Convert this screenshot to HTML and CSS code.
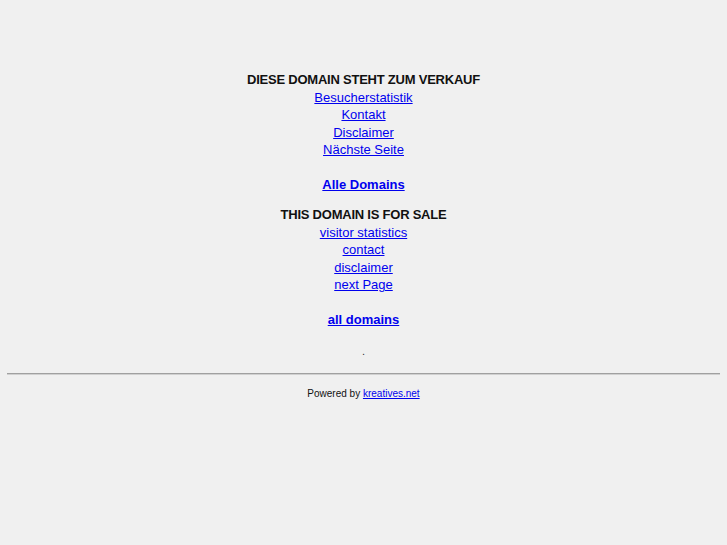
FILE: index.html
```html
<!DOCTYPE html>
<html>
<head>
<meta charset="utf-8">
<link rel="stylesheet" href="styles.css">
</head>
<body>
<div class="page">
  <div class="block">
    <div class="title">DIESE DOMAIN STEHT ZUM VERKAUF</div>
    <div class="line"><a href="#">Besucherstatistik</a></div>
    <div class="line"><a href="#">Kontakt</a></div>
    <div class="line"><a href="#">Disclaimer</a></div>
    <div class="line"><a href="#">Nächste Seite</a></div>
    <div class="line all"><a href="#">Alle Domains</a></div>
  </div>
  <div class="block second">
    <div class="title">THIS DOMAIN IS FOR SALE</div>
    <div class="line"><a href="#">visitor statistics</a></div>
    <div class="line"><a href="#">contact</a></div>
    <div class="line"><a href="#">disclaimer</a></div>
    <div class="line"><a href="#">next Page</a></div>
    <div class="line all"><a href="#">all domains</a></div>
  </div>
  <div class="dot">.</div>
  <hr class="rule">
  <div class="powered">Powered by <a href="#">kreatives.net</a></div>
</div>
</body>
</html>
```
FILE: styles.css
```css
html, body {
  margin: 0;
  padding: 0;
  background: #f0f0f0;
}
body {
  padding: 0 7px;
  font-family: "Liberation Sans", Arial, sans-serif;
  font-size: 13px;
  color: #000;
}
.page {
  padding-top: 71px;
  text-align: center;
}
.block {
  line-height: 17.5px;
}
.second {
  margin-top: 12.75px;
}
.title {
  font-weight: bold;
  color: #111;
  letter-spacing: -0.23px;
}
.line a {
  color: #0000ee;
  text-decoration: underline;
}
.all {
  margin-top: 17.5px;
  font-weight: bold;
}
.dot {
  margin-top: 14px;
  line-height: 17px;
  font-size: 11px;
  color: #333;
}
.rule {
  margin: 13px 0 0;
  border: 0;
  border-top: 1px solid #a0a0a0;
  border-bottom: 1px solid #d0d0d0;
  height: 0;
}
.powered {
  margin-top: 12px;
  font-size: 10px;
  line-height: 14px;
  color: #111;
}
.powered a {
  color: #0000ee;
}
```
